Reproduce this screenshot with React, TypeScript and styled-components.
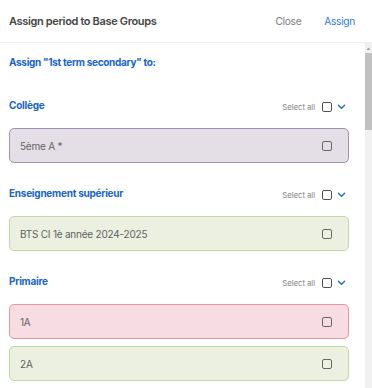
import React from "react";
import styled, { createGlobalStyle } from "styled-components";

const Global = createGlobalStyle`
  html, body { margin: 0; padding: 0; background: #fff; }
  body { font-family: Inter, "Noto Sans", sans-serif; }
  * { box-sizing: border-box; }
`;

const Panel = styled.div`
  width: 372px;
  height: 388px;
  display: flex;
  flex-direction: column;
  background: #fff;
`;

const Header = styled.div`
  height: 43px;
  flex: none;
  display: flex;
  align-items: center;
  justify-content: space-between;
  padding: 0 17px 0 9px;
  border-bottom: 1px solid #eef0f4;
`;

const Title = styled.div`
  font-size: 11px;
  font-weight: 600;
  letter-spacing: -0.35px;
  color: #454545;
`;

const Actions = styled.div`
  display: flex;
  align-items: center;
  gap: 23px;
`;

const Action = styled.span<{ $primary?: boolean }>`
  font-size: 10.2px;
  letter-spacing: -0.3px;
  color: ${(p) => (p.$primary ? "#2f78dc" : "#7d7d7d")};
`;

const Body = styled.div`
  flex: 1;
  min-height: 0;
  display: flex;
`;

const Content = styled.div`
  flex: 1;
  overflow: hidden;
  padding: 12px 16px 0 9px;
`;

const ScrollTrack = styled.div`
  width: 7px;
  flex: none;
  background: #f1f1f1;
  display: flex;
  flex-direction: column;
  align-items: stretch;
  padding-top: 2px;
`;

const ScrollArrow = styled.svg`
  width: 7px;
  height: 7px;
  flex: none;
`;

const ScrollThumb = styled.div`
  height: 77px;
  margin-top: 1px;
  background: #c1c1c1;
`;

const Intro = styled.div`
  font-size: 10px;
  font-weight: 700;
  letter-spacing: -0.3px;
  color: #1565c9;
  line-height: 14px;
  margin-bottom: 26px;
`;

const Section = styled.section`
  display: flex;
  flex-direction: column;
  margin-bottom: 20px;
`;

const SectionHead = styled.div`
  height: 20px;
  display: flex;
  align-items: center;
  justify-content: space-between;
  padding-right: 3px;
  margin-bottom: 13px;
`;

const SectionTitle = styled.div`
  font-size: 10px;
  font-weight: 700;
  letter-spacing: -0.25px;
  color: #1565c9;
`;

const SelectAll = styled.div`
  display: flex;
  align-items: center;
  margin-top: 3px;
`;

const SelectLabel = styled.span`
  font-size: 7.9px;
  letter-spacing: -0.1px;
  color: #858585;
  margin-right: 7px;
`;

const Box = styled.span<{ $dark?: boolean }>`
  width: 10px;
  height: 10px;
  border: 1.5px solid ${(p) => (p.$dark ? "#555" : "#686868")};
  border-radius: 2px;
  display: inline-block;
  flex: none;
`;

const Chevron = styled.svg`
  margin-left: 5px;
  width: 9px;
  height: 9px;
`;

const Cards = styled.div`
  display: flex;
  flex-direction: column;
  gap: 7px;
`;

type Tone = "purple" | "green" | "pink";

const tones: Record<Tone, { bg: string; border: string }> = {
  purple: { bg: "#e4dfe7", border: "#a091ac" },
  green: { bg: "#ecf0e0", border: "#c7d6a0" },
  pink: { bg: "#f7dde3", border: "#e894a3" },
};

const Card = styled.div<{ $tone: Tone }>`
  height: 35px;
  display: flex;
  align-items: center;
  justify-content: space-between;
  padding: 0 16px 0 10px;
  border-radius: 5px;
  background: ${(p) => tones[p.$tone].bg};
  border: 1px solid ${(p) => tones[p.$tone].border};
`;

const CardLabel = styled.span`
  font-size: 10px;
  letter-spacing: -0.22px;
  color: #626262;
`;

type Group = { name: string; items: { label: string; tone: Tone }[] };

const groups: Group[] = [
  { name: "Collège", items: [{ label: "5ème A *", tone: "purple" }] },
  {
    name: "Enseignement supérieur",
    items: [{ label: "BTS CI 1è année 2024-2025", tone: "green" }],
  },
  {
    name: "Primaire",
    items: [
      { label: "1A", tone: "pink" },
      { label: "2A", tone: "green" },
    ],
  },
];

export default function App() {
  return (
    <>
      <Global />
      <Panel>
        <Header>
          <Title>Assign period to Base Groups</Title>
          <Actions>
            <Action>Close</Action>
            <Action $primary>Assign</Action>
          </Actions>
        </Header>
        <Body>
          <Content>
            <Intro>Assign "1st term secondary" to:</Intro>
            {groups.map((g) => (
              <Section key={g.name}>
                <SectionHead>
                  <SectionTitle>{g.name}</SectionTitle>
                  <SelectAll>
                    <SelectLabel>Select all</SelectLabel>
                    <Box $dark />
                    <Chevron viewBox="0 0 10 10">
                      <path
                        d="M1.5 3.5 L5 7 L8.5 3.5"
                        fill="none"
                        stroke="#1f6fd1"
                        strokeWidth="1.6"
                        strokeLinecap="round"
                        strokeLinejoin="round"
                      />
                    </Chevron>
                  </SelectAll>
                </SectionHead>
                <Cards>
                  {g.items.map((it) => (
                    <Card key={it.label} $tone={it.tone}>
                      <CardLabel>{it.label}</CardLabel>
                      <Box />
                    </Card>
                  ))}
                </Cards>
              </Section>
            ))}
          </Content>
          <ScrollTrack>
            <ScrollArrow viewBox="0 0 7 7">
              <path d="M1.5 5 L3.5 2.5 L5.5 5 Z" fill="#a3a3a3" />
            </ScrollArrow>
            <ScrollThumb />
          </ScrollTrack>
        </Body>
      </Panel>
    </>
  );
}
